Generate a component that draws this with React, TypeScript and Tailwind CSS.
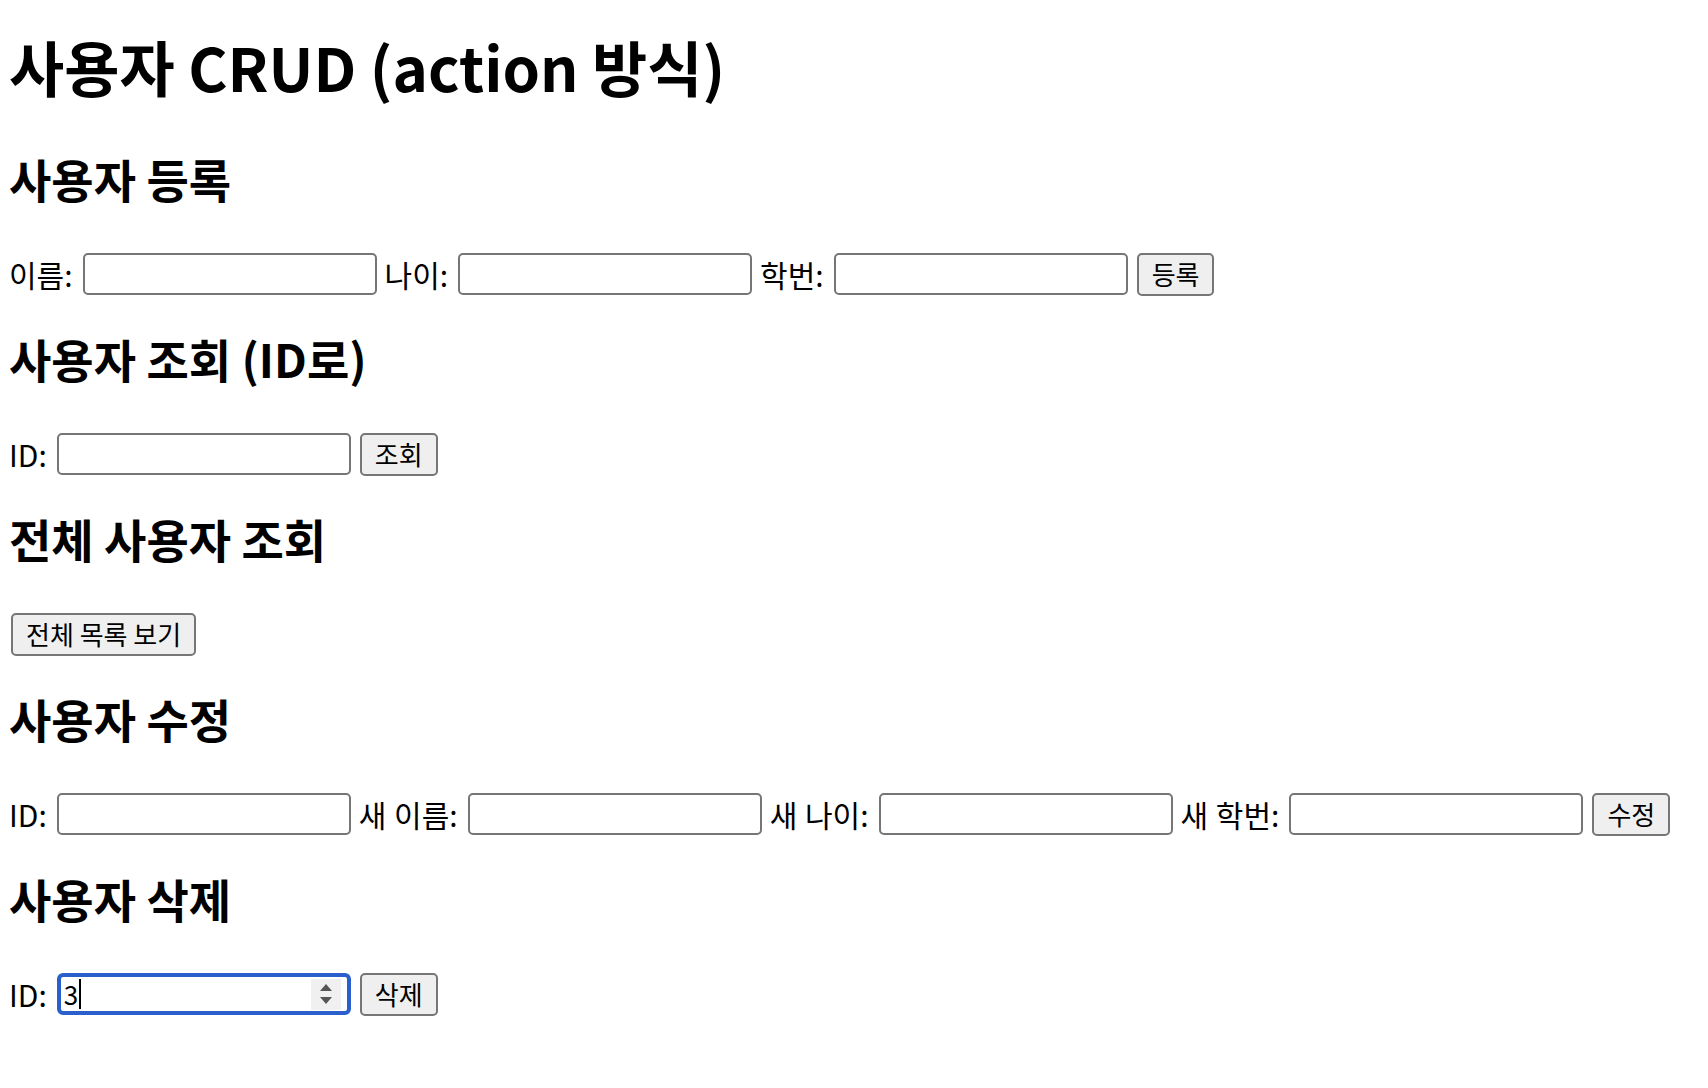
import React from 'react';

const font = { fontFamily: '"Noto Sans CJK KR", "Liberation Sans", sans-serif' };

function Field({ label, first }: { label: string; first?: boolean }) {
  return (
    <>
      <span className={`text-[30px] leading-[44px] text-black [word-spacing:1px] ${first ? '' : 'ml-[8px]'}`}>{label}</span>
      <input
        type="text"
        className="ml-[10px] w-[294px] h-[42px] rounded-[5px] border-2 border-[#767676] bg-white px-2 text-[26px] outline-none"
      />
    </>
  );
}

function Btn({ children, className = '' }: { children: React.ReactNode; className?: string }) {
  return (
    <button
      type="button"
      className={`h-[43px] rounded-[5px] border-2 border-[#767676] bg-[#efefef] px-[13px] text-[26px] leading-none text-black ${className}`}
    >
      {children}
    </button>
  );
}

function Section({ title, children }: { title: string; children: React.ReactNode }) {
  return (
    <section className="mt-[34px]">
      <h2 className="text-[46px] font-bold leading-[56px] text-black">{title}</h2>
      <div className="mt-[46px] flex h-[44px] items-center">{children}</div>
    </section>
  );
}

export default function App() {
  return (
    <div className="min-h-screen bg-white pl-[9px]" style={font}>
      <h1 className="pt-[28px] text-[60px] font-bold leading-[76px] text-black">사용자 CRUD (action 방식)</h1>
      <div className="h-[12px]" />

      <Section title="사용자 등록">
        <Field label="이름:" first />
        <Field label="나이:" />
        <Field label="학번:" />
        <Btn className="ml-[9px]">등록</Btn>
      </Section>

      <Section title="사용자 조회 (ID로)">
        <Field label="ID:" first />
        <Btn className="ml-[9px]">조회</Btn>
      </Section>

      <Section title="전체 사용자 조회">
        <Btn className="ml-[2px]">전체 목록 보기</Btn>
      </Section>

      <Section title="사용자 수정">
        <Field label="ID:" first />
        <Field label="새 이름:" />
        <Field label="새 나이:" />
        <Field label="새 학번:" />
        <Btn className="ml-[9px]">수정</Btn>
      </Section>

      <Section title="사용자 삭제">
        <span className="text-[30px] leading-[44px] text-black">ID:</span>
        <div className="ml-[10px] flex h-[42px] w-[294px] items-center rounded-[6px] border-[4px] border-[#2a5fcc] bg-white pl-[3px] pr-[6px]">
          <span className="text-[26px] leading-none text-black">3</span>
          <span className="ml-[1px] h-[30px] w-[2px] bg-black" />
          <div className="flex-1" />
          <div className="flex h-[31px] w-[30px] items-center justify-center bg-[#f0f0f0]">
            <svg width="16" height="24" viewBox="0 0 16 24">
              <path d="M8 2 L14 9 L2 9 Z" fill="#555" />
              <path d="M2 15 L14 15 L8 22 Z" fill="#555" />
            </svg>
          </div>
        </div>
        <Btn className="ml-[9px]">삭제</Btn>
      </Section>
    </div>
  );
}
